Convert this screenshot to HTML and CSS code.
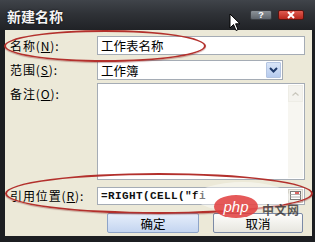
FILE: index.html
```html
<!DOCTYPE html>
<html lang="zh">
<head>
<meta charset="utf-8">
<link rel="stylesheet" href="styles.css">
</head>
<body>
<div class="window">
  <div class="titlebar">
    <span class="title">新建名称</span>
    <div class="tb-buttons">
      <span class="tb-btn help">?</span>
      <span class="tb-btn close"><svg width="10" height="8" viewBox="0 0 10 8"><path d="M2 1 L8 7 M8 1 L2 7" stroke="#fff" stroke-width="2" fill="none"/></svg></span>
    </div>
    <svg class="cursor" width="12" height="19" viewBox="0 0 12 19"><path d="M1 1 L1 15 L4.5 11.5 L7 17.5 L9 16.6 L6.6 10.8 L11 10.8 Z" fill="#fff" stroke="#000" stroke-width="1"/></svg>
  </div>
  <div class="client">
    <div class="row r1">
      <span class="label">名称(<u>N</u>):</span>
      <div class="field input">工作表名称</div>
    </div>
    <div class="row r2">
      <span class="label">范围(<u>S</u>):</span>
      <div class="field select"><span class="val">工作簿</span><span class="dd"><svg width="9" height="6" viewBox="0 0 9 6"><path d="M1 1 L4.5 4.5 L8 1" stroke="#1f3a6a" stroke-width="2" fill="none"/></svg></span></div>
    </div>
    <div class="row r3">
      <span class="label">备注(<u>O</u>):</span>
      <div class="field textarea">
        <div class="scroll">
          <span class="sb-btn"><svg width="7" height="4" viewBox="0 0 7 4"><path d="M0.5 3.5 L3.5 0.8 L6.5 3.5" stroke="#c9c7bd" stroke-width="1.2" fill="none"/></svg></span>
          <span class="sb-track"></span>
        </div>
      </div>
    </div>
    <div class="row r4">
      <span class="label">引用位置(<u>R</u>):</span>
      <div class="field input ref"><span class="mono">=RIGHT(CELL("fi</span><span class="collapse"><svg width="11" height="10" viewBox="0 0 11 10"><rect x="0.5" y="0.5" width="10" height="8" fill="#fff" stroke="#7a7a7a"/><path d="M0.5 3.5 H10.5 M0.5 6 H10.5" stroke="#b0b0b0"/><path d="M5 2 L9 2" stroke="#d03030" stroke-width="1.5"/></svg></span></div>
    </div>
    <div class="buttons">
      <span class="btn default">确定</span>
      <span class="btn">取消</span>
    </div>
  </div>
  <div class="ellipse e1"></div>
  <div class="ellipse e2"></div>
  <div class="watermark">
    <span class="wm-streak"></span>
    <span class="wm-logo">php</span>
    <span class="wm-text">中文网</span>
  </div>
</div>
</body>
</html>
```
FILE: styles.css
```css
html, body {
  margin: 0;
  padding: 0;
  background: #d8d8d8;
}
body {
  font-family: "Noto Sans CJK SC", "Liberation Sans", sans-serif;
  font-size: 12px;
  color: #000;
}
.window {
  position: relative;
  width: 315px;
  height: 242px;
  background: #1c1e21;
  overflow: hidden;
  display: flex;
  flex-direction: column;
}
.titlebar {
  position: relative;
  height: 30px;
  flex: none;
  display: flex;
  align-items: center;
  justify-content: space-between;
  padding: 0 11px 0 7px;
  background: linear-gradient(#40444a 0%, #2f3237 45%, #202226 100%);
  box-sizing: border-box;
}
.title {
  color: #f4f4f4;
  font-size: 14px;
  font-weight: bold;
  text-shadow: 0 0 2px #000;
  margin-top: 1px;
}
.tb-buttons {
  display: flex;
  gap: 6px;
  align-self: flex-start;
  margin-top: 10px;
}
.tb-btn {
  display: flex;
  align-items: center;
  justify-content: center;
  border-radius: 2px;
  color: #fff;
  font: bold 9px "Liberation Sans", sans-serif;
}
.help {
  width: 20px;
  height: 8px;
  background: linear-gradient(#8c9298, #5f656c);
  border: 1px solid #3a3d42;
}
.close {
  width: 24px;
  height: 8px;
  background: linear-gradient(#e05a4f, #b8261c);
  border: 1px solid #5a1410;
}
.cursor {
  position: absolute;
  left: 229px;
  top: 13px;
}
.client {
  flex: none;
  height: 206px;
  margin: 0 3px 0 5px;
  background: #ece9d8;
  padding: 0 7px 0 5px;
  box-sizing: border-box;
  display: flex;
  flex-direction: column;
}
.row {
  display: flex;
  align-items: center;
}
.label {
  width: 87px;
  flex: none;
  white-space: nowrap;
  line-height: 14px;
  letter-spacing: 0.9px;
}
.field {
  background: #fff;
  border: 1px solid #a5acb5;
  box-sizing: border-box;
}
.input {
  width: 208px;
  height: 19px;
  display: flex;
  align-items: center;
  padding-left: 3px;
  font-size: 12.5px;
}
.r1 { margin-top: 6px; }
.r2 { margin-top: 5px; }
.select {
  width: 186px;
  height: 20px;
  display: flex;
  align-items: center;
  justify-content: space-between;
  padding: 0 1px 0 3px;
  font-size: 12.5px;
}
.dd {
  width: 15px;
  height: 16px;
  display: flex;
  align-items: center;
  justify-content: center;
  background: linear-gradient(#d9e5f8, #b6cbee);
  border: 1px solid #b4c5e2;
  box-sizing: border-box;
  border-radius: 1px;
}
.r3 {
  margin-top: 3px;
  align-items: flex-start;
}
.r3 .label { margin-top: 4px; }
.textarea {
  width: 208px;
  height: 97px;
  display: flex;
  justify-content: flex-end;
  padding: 1px;
}
.scroll {
  width: 15px;
  display: flex;
  flex-direction: column;
  background: #f7f6f1;
}
.sb-btn {
  height: 17px;
  display: flex;
  align-items: center;
  justify-content: center;
  background: #f4f3ee;
  border: 1px solid #eeede6;
  box-sizing: border-box;
}
.sb-track { flex: 1; }
.r4 { margin-top: 7px; }
.ref {
  height: 18px;
  justify-content: space-between;
  padding: 0 1px 0 3px;
}
.mono {
  font-family: "Liberation Mono", monospace;
  font-size: 11px;
  font-weight: bold;
  letter-spacing: 0.4px;
  color: #111;
}
.collapse {
  width: 15px;
  height: 14px;
  display: flex;
  align-items: center;
  justify-content: center;
  background: #f0efe8;
  border: 1px solid #d4d2c8;
  box-sizing: border-box;
}
.buttons {
  display: flex;
  gap: 14px;
  margin-top: 8px;
  padding-left: 97px;
}
.btn {
  width: 92px;
  height: 20px;
  display: flex;
  align-items: center;
  justify-content: center;
  border: 1px solid #7b8aa6;
  border-radius: 2px;
  background: linear-gradient(#fdfdfb, #e7e6df);
  box-sizing: border-box;
  font-size: 12.5px;
}
.btn.default {
  background: linear-gradient(#e6eefb, #c4d5f0);
  border-color: #8ea4c8;
}
.btn + .btn { width: 90px; }
.ellipse {
  position: absolute;
  border: 2px solid #b3302c;
  border-radius: 50%;
  box-shadow: 0 1px 1px rgba(120, 20, 20, 0.35);
}
.e1 {
  left: 4px;
  top: 30px;
  width: 198px;
  height: 28px;
}
.e2 {
  left: 5px;
  top: 173px;
  width: 304px;
  height: 37px;
}
.watermark {
  position: absolute;
  left: 190px;
  top: 180px;
  width: 120px;
  height: 48px;
}
.wm-streak {
  position: absolute;
  left: 5px;
  top: 2px;
  width: 95px;
  height: 30px;
  background: rgba(255, 255, 255, 0.45);
  border-radius: 50%;
}
.wm-logo {
  position: absolute;
  left: 24px;
  top: 15px;
  width: 44px;
  height: 23px;
  border-radius: 50%;
  background: rgba(224, 60, 60, 0.85);
  color: #fff;
  font: italic 15px "Liberation Sans", sans-serif;
  display: flex;
  align-items: center;
  justify-content: center;
  line-height: 1;
}
.wm-text {
  position: absolute;
  left: 72px;
  top: 21px;
  font-size: 12px;
  font-weight: bold;
  color: rgba(40, 40, 40, 0.75);
  letter-spacing: 0.5px;
}
```
